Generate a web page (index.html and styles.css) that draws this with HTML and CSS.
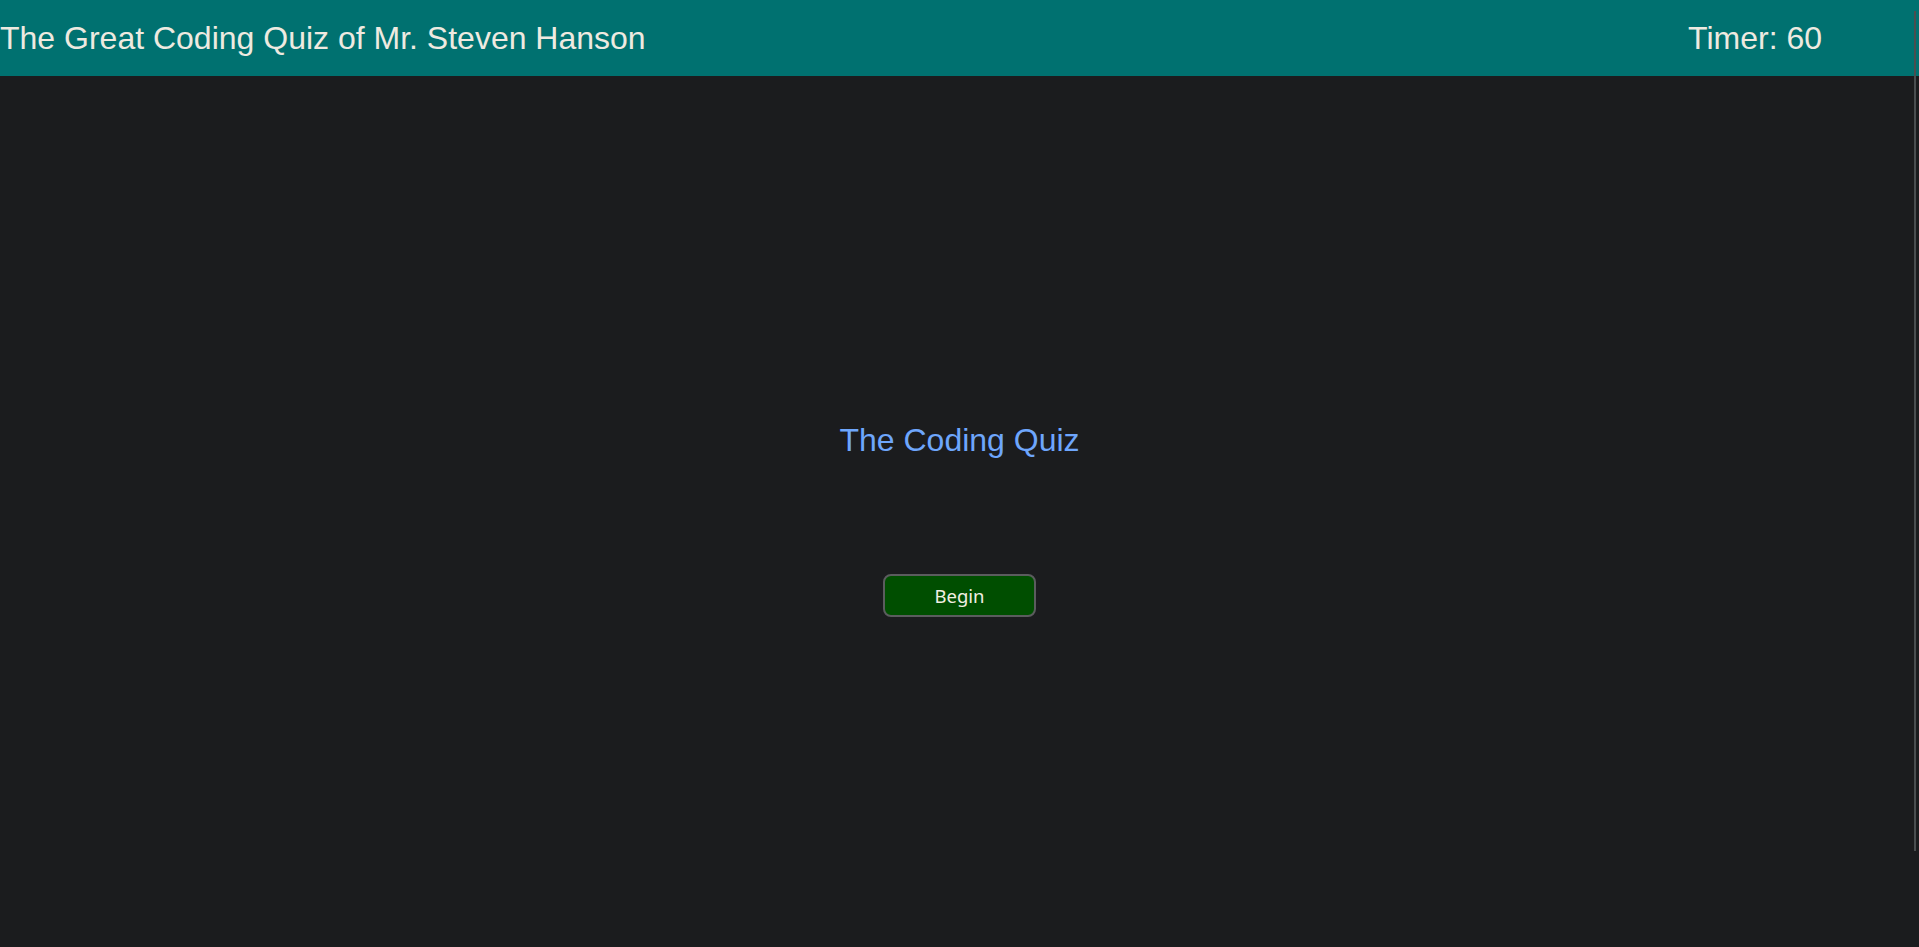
FILE: index.html
```html
<!DOCTYPE html>
<html lang="en">
<head>
<meta charset="utf-8">
<title>The Great Coding Quiz</title>
<link rel="stylesheet" href="styles.css">
</head>
<body>
  <header class="topbar">
    <div class="brand">The Great Coding Quiz of Mr. Steven Hanson</div>
    <div class="timer">Timer: <span>60</span></div>
  </header>
  <main class="stage">
    <h2 class="quiz-title">The Coding Quiz</h2>
    <button class="begin-btn" type="button">Begin</button>
  </main>
  <div class="scroll-thumb"></div>
</body>
</html>
```
FILE: styles.css
```css
html, body {
  margin: 0;
  padding: 0;
  height: 100%;
}

body {
  background: #1b1c1e;
  font-family: "Liberation Sans", Arial, sans-serif;
  color: #eeeae0;
  overflow: hidden;
}

.topbar {
  height: 76px;
  background: #007170;
  display: flex;
  align-items: center;
  justify-content: space-between;
  padding-right: 97px;
}

.brand,
.timer {
  font-size: 32px;
  color: #eeeae0;
}

.stage {
  display: flex;
  flex-direction: column;
  align-items: center;
  padding-top: 346px;
}

.quiz-title {
  margin: 0;
  font-size: 32px;
  font-weight: normal;
  color: #6ea6fc;
}

.begin-btn {
  margin-top: 115px;
  width: 153px;
  height: 43px;
  background: #004e00;
  border: 2px solid #5b5c5e;
  border-radius: 8px;
  color: #f2eee2;
  font-family: "Noto Sans", "Open Sans", sans-serif;
  font-size: 18.5px;
  padding: 0;
}

.scroll-thumb {
  position: fixed;
  top: 11px;
  left: 1914px;
  width: 2px;
  height: 840px;
  background: #4a4e50;
}
```
